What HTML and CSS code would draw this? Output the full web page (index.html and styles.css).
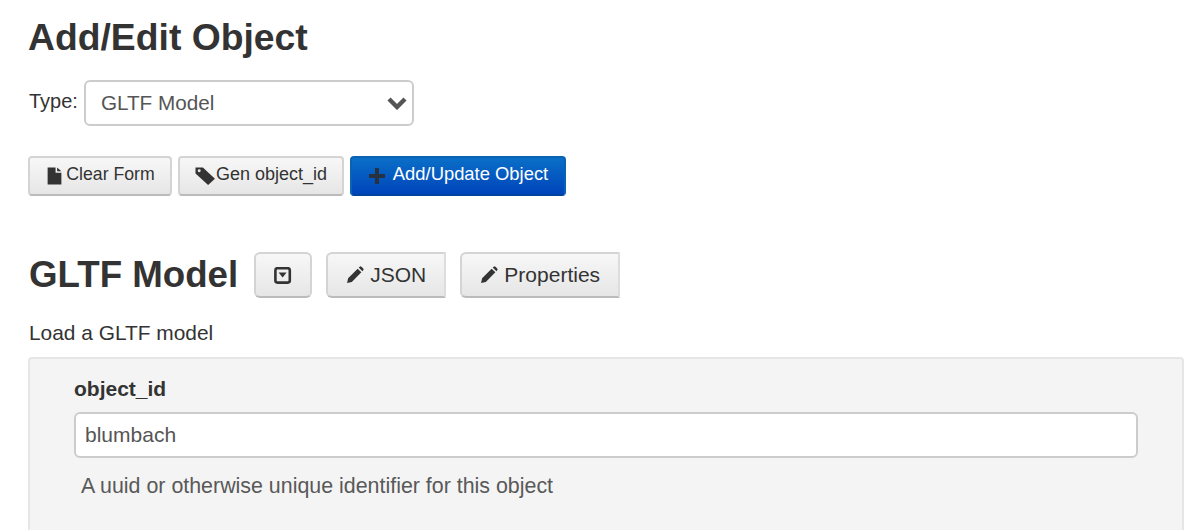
FILE: index.html
```html
<!DOCTYPE html>
<html lang="en">
<head>
<meta charset="utf-8">
<title>Add/Edit Object</title>
<link rel="stylesheet" href="styles.css">
</head>
<body>
<main class="page">
  <h1 class="title">Add/Edit Object</h1>
  <div class="type-row">
    <label class="type-label">Type:</label>
    <div class="select">
      <span>GLTF Model</span>
      <svg class="chevron" width="20" height="14" viewBox="0 0 20 14"><path d="M2 3 L10 11 L18 3" fill="none" stroke="#555" stroke-width="4.4"/></svg>
    </div>
  </div>
  <div class="actions">
    <button class="btn btn-small btn-clear">
      <svg class="icon" width="15" height="18" viewBox="0 0 14 17"><path d="M0.5 0.5H8V5.5H13.5V16.5H0.5Z" fill="#333"/><path d="M9.5 0.5L13.5 4H9.5Z" fill="#333"/></svg><span class="label">Clear Form</span>
    </button>
    <button class="btn btn-small btn-gen">
      <svg class="icon" width="21" height="20" viewBox="0 0 20 18"><path d="M0.5 1H7.5L19 11.5L12.5 17.5L0.5 6.5Z" fill="#333"/><circle cx="4" cy="4" r="1.4" fill="#e8e8e8"/></svg><span class="label">Gen object_id</span>
    </button>
    <button class="btn btn-small btn-primary">
      <svg class="icon" width="18" height="18" viewBox="0 0 18 18"><path d="M7 1H11V7H17V11H11V17H7V11H1V7H7Z" fill="#26323f"/></svg><span class="label">Add/Update Object</span>
    </button>
  </div>
  <div class="model-head">
    <h2 class="model-title">GLTF Model</h2>
    <button class="btn btn-large btn-icon">
      <svg width="18" height="17" viewBox="0 0 18 17"><rect x="1.4" y="1.2" width="14.4" height="14.4" rx="2" fill="none" stroke="#333" stroke-width="2.6"/><path d="M4.6 5.6H12.6L8.6 10.6Z" fill="#333"/></svg>
    </button>
    <button class="btn btn-large btn-square btn-json">
      <svg class="pencil" width="18" height="18" viewBox="0 0 17 17"><path d="M1 16L2 11.5L11 2.5L14.5 6L5.5 15ZM12 1.5L13 .7Q13.8 0 14.6 .7L16.3 2.4Q17 3.2 16.3 4L15.5 5Z" fill="#333"/></svg>JSON
    </button>
    <button class="btn btn-large btn-square btn-props">
      <svg class="pencil" width="18" height="18" viewBox="0 0 17 17"><path d="M1 16L2 11.5L11 2.5L14.5 6L5.5 15ZM12 1.5L13 .7Q13.8 0 14.6 .7L16.3 2.4Q17 3.2 16.3 4L15.5 5Z" fill="#333"/></svg>Properties
    </button>
  </div>
  <p class="desc">Load a GLTF model</p>
  <section class="panel">
    <label class="field-label">object_id</label>
    <div class="input">blumbach</div>
    <p class="help">A uuid or otherwise unique identifier for this object</p>
  </section>
</main>
</body>
</html>
```
FILE: styles.css
```css
* { box-sizing: border-box; }
html, body { margin: 0; height: 530px; overflow: hidden; background: #fff; }
body { font-family: "Liberation Sans", Arial, sans-serif; color: #333; }
.page { padding: 0 18px 0 28px; }
.title { margin: 0; padding-top: 15px; font-size: 37.3px; line-height: 44px; font-weight: 700; color: #333; }
.type-row { display: flex; align-items: flex-start; gap: 6px; margin-top: 21px; }
.type-label { font-size: 20px; line-height: 42px; color: #333; margin-left: 1px; }
.select { width: 330px; height: 46px; padding: 0 5px 0 15px; display: flex; align-items: center; justify-content: space-between; background: #fff; border: 2px solid #ccc; border-radius: 6px; font-size: 20.7px; color: #555; }
.chevron { display: block; }
.actions { display: flex; gap: 6px; margin-top: 30px; }
.btn { display: inline-flex; align-items: center; justify-content: center; font-family: inherit; color: #333; background: linear-gradient(#f7f7f7, #e6e6e6); border: 2px solid #d4d4d4; border-bottom-color: #bbb; border-radius: 4px; padding: 0; }
.btn-small { height: 40px; font-size: 18px; }
.btn-small .label { padding-bottom: 4px; }
.btn-clear { width: 144px; padding-left: 2px; font-size: 17.7px; }
.btn-clear .icon { margin-right: 4px; }
.btn-gen { width: 166px; }
.btn-gen .icon { margin-right: 0; }
.btn-primary { width: 216px; font-size: 18.4px; color: #fff; background: linear-gradient(#0a6fc7, #0044bb); border-color: #0a62b5; border-bottom-color: #0044a0; }
.btn-primary .icon { margin-right: 7px; }
.model-head { display: flex; align-items: center; margin-top: 55px; height: 48px; padding-left: 1px; }
.model-title { margin: 0 16px 0 0; font-size: 36.7px; font-weight: 700; line-height: 48px; color: #333; }
.btn-large { height: 46px; font-size: 21px; }
.btn-icon { width: 58px; margin-right: 14px; border-radius: 6px; }
.btn-square { border-radius: 6px 0 0 6px; border-right-color: #ddd; }
.btn-json { width: 120px; margin-right: 14px; }
.btn-props { width: 160px; }
.pencil { margin-right: 6px; }
.desc { margin: 20px 0 0 1px; font-size: 20.9px; line-height: 28px; color: #333; }
.panel { margin-top: 10px; height: 220px; background: #f4f4f4; border: 2px solid #e6e6e6; border-radius: 4px; padding: 16px 44px 0 44px; }
.field-label { display: block; font-size: 21px; font-weight: 700; line-height: 28px; color: #333; }
.input { margin-top: 9px; height: 46px; padding: 0 9px; display: flex; align-items: center; background: #fff; border: 2px solid #ccc; border-radius: 6px; font-size: 21px; color: #555; }
.help { margin: 14px 0 0 7px; font-size: 21.4px; line-height: 28px; color: #595959; }
```
